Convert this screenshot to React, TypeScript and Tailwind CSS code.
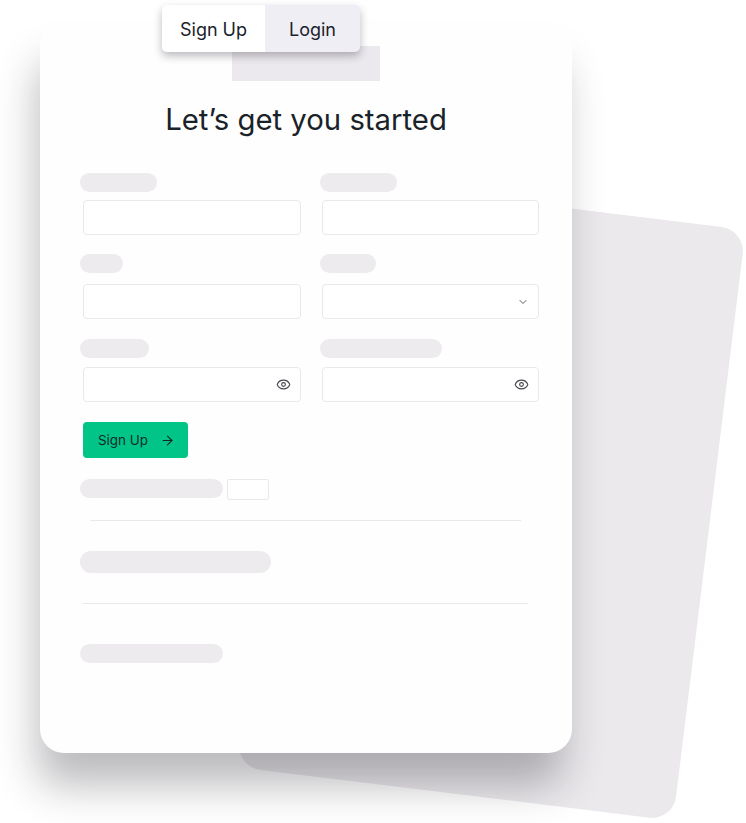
import { ArrowRight, ChevronDown, Eye } from "lucide-react";

function Pill({ className }: { className: string }) {
  return <div className={`rounded-full bg-[#edebee] ${className}`} />;
}

function Input({ icon }: { icon?: "eye" | "chevron" }) {
  return (
    <div className="flex h-[35px] items-center justify-end rounded-[4px] border border-[#e9e8ec] bg-white pr-[9px]">
      {icon === "eye" && <Eye className="h-[15px] w-[15px] text-[#46464c]" strokeWidth={1.75} />}
      {icon === "chevron" && <ChevronDown className="h-[12px] w-[12px] text-[#46464c]" strokeWidth={1.75} />}
    </div>
  );
}

function Field({ label, icon, inset, gap }: { label: string; icon?: "eye" | "chevron"; inset: string; gap: string }) {
  return (
    <div className="flex flex-col">
      <Pill className={`h-[19px] ${label}`} />
      <div className={`${inset} ${gap}`}>
        <Input icon={icon} />
      </div>
    </div>
  );
}

export default function App() {
  return (
    <div className="relative h-[823px] w-[746px] overflow-hidden bg-white font-['Inter',sans-serif]">
      {/* back sheet */}
      <div className="absolute left-[271px] top-[201px] h-[595px] w-[440px] rotate-[7deg] rounded-[24px] bg-[#ebe9ec]" />

      {/* main card */}
      <div className="relative ml-[40px] mt-[22px] flex h-[731px] w-[532px] flex-col items-start rounded-[24px] bg-[#fefefe] px-[40px] shadow-[-6px_36px_42px_-4px_rgba(30,25,35,0.3)]">
        <div className="mt-[24px] h-[35px] w-[148px] self-center bg-[#ebe9ed]" />
        <h1 className="mt-[21px] self-center text-center text-[29.3px] leading-[36px] text-[#1a2229]">Let’s get you started</h1>

        <div className="mt-[35px] grid w-full grid-cols-[226px_1fr] gap-x-[14px]">
          <div className="flex flex-col">
            <Field inset="ml-[3px] w-[218px]" gap="mt-[8px]" label="w-[77px]" />
            <div className="h-[19px]" />
            <Field inset="ml-[3px] w-[218px]" gap="mt-[11px]" label="w-[43px]" />
            <div className="h-[20px]" />
            <Field inset="ml-[3px] w-[218px]" gap="mt-[9px]" label="w-[69px]" icon="eye" />
          </div>
          <div className="flex flex-col">
            <Field inset="ml-[2px] w-[217px]" gap="mt-[8px]" label="w-[77px]" />
            <div className="h-[19px]" />
            <Field inset="ml-[2px] w-[217px]" gap="mt-[11px]" label="w-[56px]" icon="chevron" />
            <div className="h-[20px]" />
            <Field inset="ml-[2px] w-[217px]" gap="mt-[9px]" label="w-[122px]" icon="eye" />
          </div>
        </div>

        <button className="ml-[3px] mt-[20px] flex h-[36px] w-[105px] items-center gap-[12px] rounded-[4px] bg-[#00c586] pl-[15px] text-[13.4px] text-[#0c2b2a]">
          Sign Up
          <ArrowRight className="h-[15px] w-[15px]" strokeWidth={1.75} />
        </button>

        <div className="mt-[21px] flex items-start gap-[4px]">
          <Pill className="h-[19px] w-[143px]" />
          <div className="h-[21px] w-[42px] rounded-[2px] border border-[#e9e8ec] bg-white" />
        </div>
        <div className="ml-[10px] mt-[20px] h-px w-[431px] bg-[#e9e8ec]" />
        <Pill className="mt-[30px] h-[22px] w-[191px]" />
        <div className="ml-[3px] mt-[30px] h-px w-[445px] bg-[#e9e8ec]" />
        <Pill className="mt-[40px] h-[19px] w-[143px]" />

        {/* tabs */}
        <div className="absolute left-[122px] top-[-17px] flex h-[47px] w-[198px] overflow-hidden rounded-[5px] bg-[#f0eef5] text-[18px] text-[#1a2229] shadow-[0_4px_8px_rgba(30,25,40,0.3)]">
          <div className="flex w-[103px] items-center justify-center bg-white pt-[1px]">Sign Up</div>
          <div className="flex flex-1 items-center justify-center pt-[1px]">Login</div>
        </div>
      </div>
    </div>
  );
}
